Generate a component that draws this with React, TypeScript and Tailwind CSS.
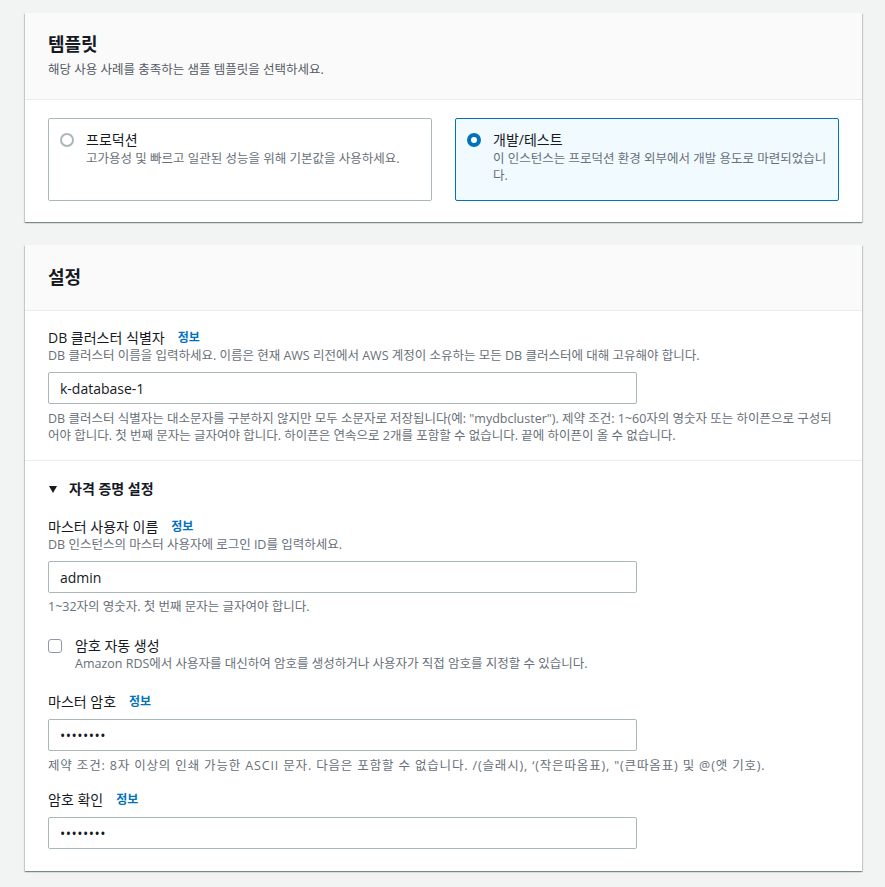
import { ReactNode } from 'react';

// ─── Building blocks ──────────────────────────────────────────────────────────

const FONT = 'font-["Open_Sans","Noto_Sans_CJK_KR",sans-serif]';

function Card({ title, subtitle, children, className = '' }: { title: string; subtitle?: string; children: ReactNode; className?: string }) {
  return (
    <section
      className={`bg-white shadow-[0_1px_1px_0_rgba(0,28,36,0.3),1px_1px_1px_0_rgba(0,28,36,0.15),-1px_1px_1px_0_rgba(0,28,36,0.15)] ${className}`}
    >
      <header className={`bg-[#fafafa] border-b border-[#eaeded] px-[23px] ${subtitle ? 'pt-[19px] pb-[19px]' : 'pt-5 pb-[21px]'}`}>
        <h2 className="text-[18px] leading-[24px] font-bold text-[#16191f]">{title}</h2>
        {subtitle && <p className="mt-1 text-[12.5px] leading-[20px] text-[#545b64]">{subtitle}</p>}
      </header>
      {children}
    </section>
  );
}

function Info() {
  return <a className="ml-[13px] text-[12px] font-bold text-[#0073bb] cursor-pointer">정보</a>;
}

function Label({ children, className = '' }: { children: ReactNode; className?: string }) {
  return (
    <div className={`flex items-center text-[14px] leading-[20px] text-[#16191f] ${className}`}>
      {children}
      <Info />
    </div>
  );
}

function Desc({ children, className = '' }: { children: ReactNode; className?: string }) {
  return <p className={`text-[12.5px] leading-[16px] text-[#687078] ${className}`}>{children}</p>;
}

function Help({ children, className = '' }: { children: ReactNode; className?: string }) {
  return <p className={`text-[12.5px] leading-[17px] text-[#687078] ${className}`}>{children}</p>;
}

function TextInput({ value, className = '' }: { value: string; className?: string }) {
  return (
    <div
      className={`w-[589px] h-8 flex items-center pl-[11px] border border-[#aab7b8] rounded-[2px] bg-white text-[14px] text-[#16191f] ${className}`}
    >
      {value}
    </div>
  );
}

function Tile({ title, desc, selected }: { title: string; desc: string; selected?: boolean }) {
  return (
    <div
      className={`flex gap-3 pl-[11px] pr-1 pt-[11px] pb-4 rounded-[2px] border ${
        selected ? 'border-[#0073bb] bg-[#f1faff]' : 'border-[#aab7b8] bg-white'
      }`}
    >
      <span
        className={`mt-[3px] shrink-0 h-[14px] w-[14px] rounded-full ${
          selected ? 'border-[4.5px] border-[#0073bb] bg-white' : 'border-2 border-[#aab7b8] bg-white'
        }`}
      />
      <div>
        <div className="text-[14px] leading-[20px] text-[#16191f]">{title}</div>
        <div className="text-[12.5px] leading-[17px] text-[#687078]">{desc}</div>
      </div>
    </div>
  );
}

// ─── Page ─────────────────────────────────────────────────────────────────────

export default function App() {
  return (
    <div className={`min-h-[887px] bg-[#f2f3f3] pl-[25px] pr-[23px] pt-[13px] pb-6 ${FONT}`}>
      {/* Template */}
      <Card title="템플릿" subtitle="해당 사용 사례를 충족하는 샘플 템플릿을 선택하세요.">
        <div className="grid grid-cols-2 gap-[23px] px-[23px] pt-[18px] pb-[21px]">
          <Tile title="프로덕션" desc="고가용성 및 빠르고 일관된 성능을 위해 기본값을 사용하세요." />
          <Tile selected title="개발/테스트" desc="이 인스턴스는 프로덕션 환경 외부에서 개발 용도로 마련되었습니다." />
        </div>
      </Card>

      {/* Settings */}
      <Card title="설정" className="mt-[23px]">
        <div className="px-[23px] pt-[17px] pb-4">
          <Label>DB 클러스터 식별자</Label>
          <Desc>DB 클러스터 이름을 입력하세요. 이름은 현재 AWS 리전에서 AWS 계정이 소유하는 모든 DB 클러스터에 대해 고유해야 합니다.</Desc>
          <TextInput value="k-database-1" className="mt-2" />
          <Help className="mt-[6px]">
            DB 클러스터 식별자는 대소문자를 구분하지 않지만 모두 소문자로 저장됩니다(예: "mydbcluster"). 제약 조건: 1~60자의 영숫자 또는 하이픈으로 구성되어야 합니다. 첫 번째 문자는 글자여야 합니다. 하이픈은 연속으로 2개를 포함할 수 없습니다. 끝에 하이픈이 올 수 없습니다.
          </Help>
        </div>

        <div className="border-t border-[#eaeded] px-[23px] pt-[18px] pb-[22px]">
          <div className="flex items-center gap-[12px] text-[14px] leading-[20px] font-bold text-[#16191f]">
            <svg width="8" height="7" viewBox="0 0 8 7" className="ml-[1px]">
              <path d="M0 0h8L4 7z" fill="#16191f" />
            </svg>
            자격 증명 설정
          </div>

          <Label className="mt-[18px]">마스터 사용자 이름</Label>
          <Desc>DB 인스턴스의 마스터 사용자에 로그인 ID를 입력하세요.</Desc>
          <TextInput value="admin" className="mt-2" />
          <Help className="mt-[5px]">1~32자의 영숫자. 첫 번째 문자는 글자여야 합니다.</Help>

          <div className="mt-[21px] flex gap-[13px]">
            <span className="mt-[3px] shrink-0 h-[14px] w-[14px] rounded-[3px] border border-[#8d99a8] bg-white" />
            <div>
              <div className="text-[14px] leading-[20px] text-[#16191f]">암호 자동 생성</div>
              <Desc>Amazon RDS에서 사용자를 대신하여 암호를 생성하거나 사용자가 직접 암호를 지정할 수 있습니다.</Desc>
            </div>
          </div>

          <Label className="mt-5">마스터 암호</Label>
          <TextInput value="••••••••" className="mt-[7px] tracking-[0.5px]" />
          <Help className="mt-[6px] tracking-[0.85px]">
            제약 조건: 8자 이상의 인쇄 가능한 ASCII 문자. 다음은 포함할 수 없습니다. /(슬래시), ‘(작은따옴표), "(큰따옴표) 및 @(앳 기호).
          </Help>

          <Label className="mt-4">암호 확인</Label>
          <TextInput value="••••••••" className="mt-[7px] tracking-[0.5px]" />
        </div>
      </Card>
    </div>
  );
}
